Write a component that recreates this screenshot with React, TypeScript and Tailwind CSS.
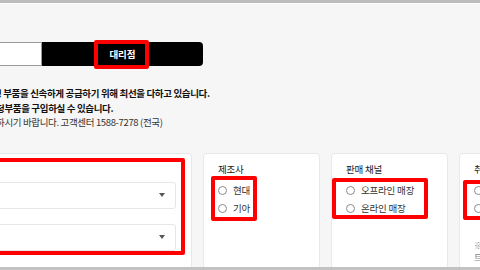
import React from "react";

const font = { fontFamily: '"Noto Sans CJK KR", "Noto Sans", sans-serif' };

// small round radio, unchecked
const Radio = ({ label }: { label: string }) => (
  <label className="flex h-[14px] items-center gap-[6px] text-[9.5px] tracking-[-0.2px] text-[#333]">
    <span className="h-[9px] w-[9px] shrink-0 rounded-full border border-[#8a8a8a] bg-white" />
    <span>{label}</span>
  </label>
);

// red annotation frame laid over a card
const Mark = ({ className }: { className: string }) => (
  <div className={`pointer-events-none absolute rounded-[2px] border-[4px] border-[#ff0000] ${className}`} />
);

const SelectBox = () => (
  <div className="flex h-[27px] items-center justify-end rounded-[3px] border border-[#e6e6e6] bg-white pr-[10px]">
    <svg width="6" height="4" viewBox="0 0 6 4">
      <path d="M0 0h6L3 4z" fill="#555" />
    </svg>
  </div>
);

export default function App() {
  return (
    <div className="flex h-[270px] w-[480px] flex-col overflow-hidden bg-[#f6f6f6]" style={font}>
      <div className="h-[3px] shrink-0 bg-[#bdbdbd]" />
      <div className="h-px shrink-0 bg-[#fcfcfc]" />

      <main className="min-h-0 flex-1 overflow-hidden">
        {/* dealer toggle */}
        <div className="ml-[-121px] mt-[38px] flex h-[24px] w-[324px]">
          <div className="flex-1 rounded-l-[3px] border border-[#9a9a9a] bg-white" />
          <div className="relative flex flex-1 items-center justify-center rounded-r-[4px] bg-black text-[9.5px] font-bold text-white">
            대리점
            <Mark className="left-[52px] top-[-2px] h-[29px] w-[55px]" />
          </div>
        </div>

        {/* notice */}
        <div className="mt-[20px] text-[9.5px] leading-[14.5px] tracking-[-0.35px]">
          <p className="ml-[-7px] whitespace-nowrap font-bold text-[#111]">정 부품을 신속하게 공급하기 위해 최선을 다하고 있습니다.</p>
          <p className="ml-[-4px] whitespace-nowrap font-bold text-[#111]">정부품을 구입하실 수 있습니다.</p>
          <p className="ml-[-4px] whitespace-nowrap text-[#333]">하시기 바랍니다. 고객센터 1588-7278 (전국)</p>
        </div>

        {/* filter cards */}
        <div className="ml-[-108px] mt-[23px] flex gap-[11px]">
          <div className="relative h-[140px] w-[300px] shrink-0 rounded-[4px] border border-[#e8e8e8] bg-white pl-[20px] pr-[15px] pt-[28px]">
            <div className="flex flex-col gap-[15px]">
              <SelectBox />
              <SelectBox />
            </div>
            <Mark className="left-[8px] right-[6px] top-[4px] h-[97px]" />
          </div>

          <div className="relative h-[140px] w-[117px] shrink-0 rounded-[4px] border border-[#e8e8e8] bg-white px-[14px] pt-[9px]">
            <h3 className="text-[9.5px] leading-[12px] tracking-[-0.2px] text-[#222]">제조사</h3>
            <div className="mt-[9px] flex flex-col gap-[4px]">
              <Radio label="현대" />
              <Radio label="기아" />
            </div>
            <Mark className="left-[7px] top-[22px] h-[45px] w-[46px]" />
          </div>

          <div className="relative h-[140px] w-[117px] shrink-0 rounded-[4px] border border-[#e8e8e8] bg-white px-[14px] pt-[9px]">
            <h3 className="text-[9.5px] leading-[12px] tracking-[-0.2px] text-[#222]">판매 채널</h3>
            <div className="mt-[9px] flex flex-col gap-[4px]">
              <Radio label="오프라인 매장" />
              <Radio label="온라인 매장" />
            </div>
            <Mark className="left-0 top-[24px] h-[41px] w-[96px]" />
          </div>

          <div className="relative h-[140px] w-[117px] shrink-0 rounded-[4px] border border-[#e8e8e8] bg-white px-[14px] pt-[9px]">
            <h3 className="text-[9.5px] leading-[12px] tracking-[-0.2px] text-[#222]">취급 품목</h3>
            <div className="mt-[9px] flex flex-col gap-[4px]">
              <Radio label="전체" />
              <Radio label="일부" />
            </div>
            <p className="mt-[24px] text-[9px] leading-[12px] text-[#888]">※ 취급 품목은</p>
            <p className="text-[9px] leading-[12px] text-[#888]">트럭 부품</p>
            <Mark className="left-[3px] top-[26px] h-[40px] w-[70px]" />
          </div>
        </div>
      </main>

      <div className="h-[3px] shrink-0 bg-[#c2c2c2]" />
    </div>
  );
}
